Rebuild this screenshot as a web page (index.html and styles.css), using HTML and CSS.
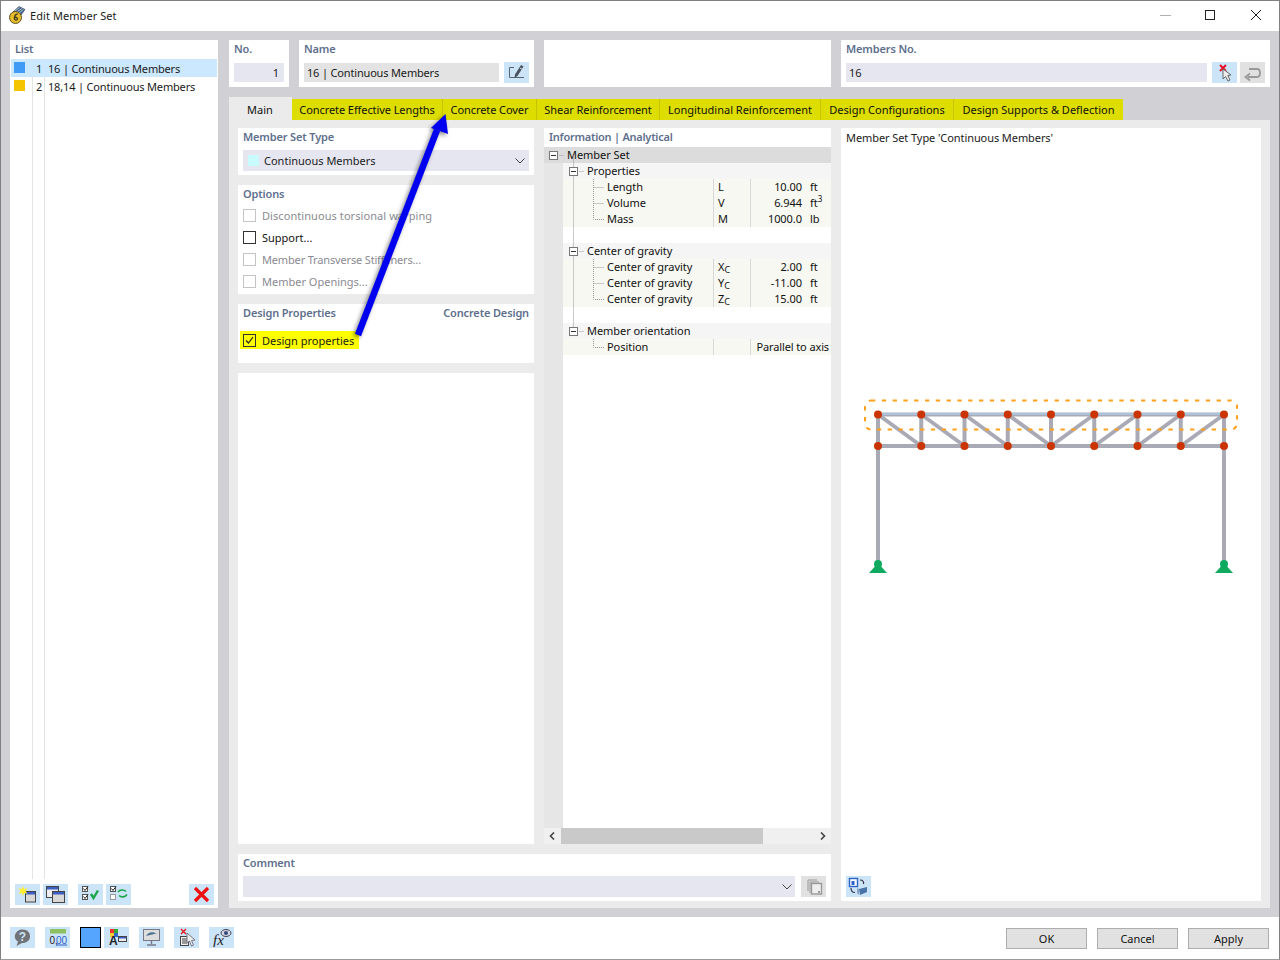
FILE: index.html
```html
<!DOCTYPE html>
<html lang="en">
<head>
  <meta charset="UTF-8">
  <title>Edit Member Set</title>
  <link rel="stylesheet" href="styles.css">
</head>
<body>
<div class="window">
  <div class="titlebar">
    <svg class="app-icon" width="18" height="18" viewBox="0 0 18 18">
      <path d="M5 6 L11 0.500 L17 3.500 L13 9 Z" fill="#44668c" stroke="#2c3c54" stroke-width=".6"/>
      <path d="M7 5 L11.500 1.500 M9 6 L14 2.500 M11 7 L15.500 3.500" stroke="#c8d4e0" stroke-width=".8"/>
      <circle cx="7.500" cy="11.500" r="6" fill="#e6bb2c" stroke="#5a5220"/>
      <path d="M9.800 8.200 C6.500 7.500 5.200 14.200 7.800 14.200 C10.300 14.200 10 10.800 6.500 11.300" fill="none" stroke="#3a3a20" stroke-width="1.300"/>
    </svg>
    <span class="title-text">Edit Member Set</span>
    <div class="win-controls">
      <svg width="12" height="12" viewBox="0 0 12 12"><path d="M0 6.500H11" stroke="#b0b0b0"/></svg>
      <svg width="12" height="12" viewBox="0 0 12 12"><rect x="1.500" y="1.500" width="9" height="9" fill="none" stroke="#222"/></svg>
      <svg width="12" height="12" viewBox="0 0 12 12"><path d="M1 1L11 11M11 1L1 11" stroke="#222"/></svg>
    </div>
  </div>

  <div class="main">
    <aside class="list-panel">
      <div class="group-title list-title">List</div>
      <div class="list-body">
        <div class="list-row selected"><span class="swatch blue"></span><span class="idx">1</span><span>16 | Continuous Members</span></div>
        <div class="list-row"><span class="swatch amber"></span><span class="idx">2</span><span>18,14 | Continuous Members</span></div>
      </div>
      <div class="list-tools">
        <button class="tool">
          <svg width="21" height="19" viewBox="0 0 21 19"><rect x="8.500" y="6.500" width="10" height="10.500" fill="#d8d8d8" stroke="#444"/><rect x="9" y="7" width="9" height="2.500" fill="#3d5fc4"/><path d="M6 1L7.200 4L10.500 3.300L8.500 6L10.500 8.700L7.200 8L6 11L4.800 8L1.500 8.700L3.500 6L1.500 3.300L4.800 4Z" fill="#ffee33"/></svg>
        </button>
        <button class="tool">
          <svg width="21" height="19" viewBox="0 0 21 19"><rect x="1.500" y="1.500" width="12" height="11" fill="#eee" stroke="#444"/><rect x="2" y="2" width="11" height="2.500" fill="#3d5fc4"/><rect x="7.500" y="6.500" width="12" height="11" fill="#d8d8d8" stroke="#444"/><rect x="8" y="7" width="11" height="2.500" fill="#3d5fc4"/></svg>
        </button>
        <button class="tool tool-sep">
          <svg width="21" height="19" viewBox="0 0 21 19"><rect x="2.500" y="1.500" width="5" height="5" fill="#fff" stroke="#555"/><rect x="2.500" y="9.500" width="5" height="5" fill="#fff" stroke="#555"/><path d="M3.500 3.500L5 5.500L8 1.500M3.500 11.500L5 13.500L8 9.500" fill="none" stroke="#222"/><path d="M11 9L13.500 13L18 5.500" fill="none" stroke="#1aa64a" stroke-width="2.400"/></svg>
        </button>
        <button class="tool">
          <svg width="21" height="19" viewBox="0 0 21 19"><rect x="2.500" y="1.500" width="5" height="5" fill="#fff" stroke="#555"/><rect x="2.500" y="9.500" width="5" height="5" fill="#fff" stroke="#999"/><path d="M3.500 3.500L5 5.500L8 1.500" fill="none" stroke="#222"/><path d="M10 7C12 4.500 16 4.500 18 6.500M19 9.500C17 12.500 13 12.500 11 10.500" fill="none" stroke="#1aa64a" stroke-width="1.600"/></svg>
        </button>
        <button class="tool tool-end">
          <svg width="21" height="19" viewBox="0 0 21 19"><path d="M4 3L17 16M17 3L4 16" stroke="#ee1111" stroke-width="3.200"/></svg>
        </button>
      </div>
    </aside>

    <div class="content">
      <div class="top-row">
        <div class="card no-card">
          <div class="group-title">No.</div>
          <div class="field right">1</div>
        </div>
        <div class="card name-card">
          <div class="group-title">Name</div>
          <div class="field-row">
            <div class="field grey grow piped">16 | Continuous Members</div>
            <button class="tool">
              <svg width="21" height="19" viewBox="0 0 21 19"><path d="M8 4.500H3.500V14.500H18" fill="none" stroke="#5a6470"/><path d="M15 2L17.500 3.500L11.500 13L8.500 15L9 11.500Z" fill="#4a525c"/><path d="M14 5L16 6.200" stroke="#cce4f7"/></svg>
            </button>
          </div>
        </div>
        <div class="card blank-card"></div>
        <div class="card members-card">
          <div class="group-title">Members No.</div>
          <div class="field-row">
            <div class="field grow">16</div>
            <button class="tool">
              <svg width="21" height="19" viewBox="0 0 21 19"><path d="M6 2L12 8M12 2L6 8" stroke="#e8102a" stroke-width="2"/><path d="M9 6L9 16L11.500 13.500L14 18L16 17L13.800 12.500L17 12Z" fill="#eee" stroke="#666"/></svg>
            </button>
            <button class="tool disabled">
              <svg width="21" height="19" viewBox="0 0 21 19"><path d="M6 14H15C19 14 19 6 15 6H7" fill="none" stroke="#999" stroke-width="1.800"/><path d="M8 10.500L3.500 14L8 17.500" fill="none" stroke="#999" stroke-width="1.800"/></svg>
            </button>
          </div>
        </div>
      </div>

      <div class="tabs-area">
        <div class="tabs">
          <div class="tab active">Main</div>
          <div class="tab">Concrete Effective Lengths</div>
          <div class="tab">Concrete Cover</div>
          <div class="tab">Shear Reinforcement</div>
          <div class="tab">Longitudinal Reinforcement</div>
          <div class="tab">Design Configurations</div>
          <div class="tab">Design Supports &amp; Deflection</div>
        </div>
        <div class="tab-body">
          <div class="left-side">
            <div class="upper">
              <div class="settings">
                <section class="card set-type">
                  <div class="group-title">Member Set Type</div>
                  <div class="select">
                    <span class="swatch cyan"></span>
                    <span>Continuous Members</span>
                    <svg class="chev" width="10" height="6" viewBox="0 0 10 6"><path d="M.5 .5L5 5L9.500 .5" fill="none" stroke="#444"/></svg>
                  </div>
                </section>
                <section class="card options">
                  <div class="group-title">Options</div>
                  <div class="check-row off spread"><span class="check"></span>Discontinuous torsional warping</div>
                  <div class="check-row"><span class="check"></span>Support...</div>
                  <div class="check-row off tight"><span class="check"></span>Member Transverse Stiffeners...</div>
                  <div class="check-row off"><span class="check"></span>Member Openings...</div>
                </section>
                <section class="card design">
                  <div class="group-title split"><span>Design Properties</span><span>Concrete Design</span></div>
                  <div class="marked">
                    <span class="check">
                      <svg width="11" height="11" viewBox="0 0 11 11"><path d="M2 5.500L4.500 8L9 2" fill="none" stroke="#222" stroke-width="1.200"/></svg>
                    </span>Design properties
                  </div>
                </section>
                <section class="card filler"></section>
              </div>

              <div class="card info">
                <div class="group-title info-title">Information | Analytical</div>
                <div class="tree">
                  <svg class="tree-lines" width="60" height="210" viewBox="0 0 60 210">
                    <g stroke="#999" stroke-dasharray="1 1" fill="none">
                      <path d="M15.500 8.500H20M29.500 8.500V184.500M35.500 24.500H40M35.500 104.500H40M35.500 184.500H40M49.500 32V72.500H60M49.500 40.500H60M49.500 56.500H60M49.500 112V152.500H60M49.500 120.500H60M49.500 136.500H60M49.500 192V200.500H60"/>
                    </g>
                  </svg>
                  <div class="tree-row head"><span class="box"></span>Member Set</div>
                  <div class="tree-row sub"><span class="box"></span>Properties</div>
                  <div class="tree-row leaf"><span class="nm">Length</span><span class="sym">L</span><span class="val">10.00</span><span class="unit">ft</span></div>
                  <div class="tree-row leaf"><span class="nm">Volume</span><span class="sym">V</span><span class="val">6.944</span><span class="unit">ft<sup>3</sup></span></div>
                  <div class="tree-row leaf"><span class="nm">Mass</span><span class="sym">M</span><span class="val">1000.0</span><span class="unit">lb</span></div>
                  <div class="tree-row gap"></div>
                  <div class="tree-row sub"><span class="box"></span>Center of gravity</div>
                  <div class="tree-row leaf"><span class="nm">Center of gravity</span><span class="sym">X<small>C</small></span><span class="val">2.00</span><span class="unit">ft</span></div>
                  <div class="tree-row leaf"><span class="nm">Center of gravity</span><span class="sym">Y<small>C</small></span><span class="val">-11.00</span><span class="unit">ft</span></div>
                  <div class="tree-row leaf"><span class="nm">Center of gravity</span><span class="sym">Z<small>C</small></span><span class="val">15.00</span><span class="unit">ft</span></div>
                  <div class="tree-row gap"></div>
                  <div class="tree-row sub"><span class="box"></span>Member orientation</div>
                  <div class="tree-row leaf"><span class="nm">Position</span><span class="sym"></span><span class="val wide">Parallel to axis</span></div>
                  <div class="tree-rest"></div>
                </div>
                <div class="scrollbar">
                  <svg width="6" height="8" viewBox="0 0 6 8"><path d="M5 .5L1.500 4L5 7.500" fill="none" stroke="#444" stroke-width="1.600"/></svg>
                  <div class="thumb"></div>
                  <svg width="6" height="8" viewBox="0 0 6 8"><path d="M1 .5L4.500 4L1 7.500" fill="none" stroke="#444" stroke-width="1.600"/></svg>
                </div>
              </div>
            </div>
            <section class="card comment">
              <div class="group-title">Comment</div>
              <div class="field-row">
                <div class="select grow">
                  <svg class="chev" width="10" height="6" viewBox="0 0 10 6"><path d="M.5 .5L5 5L9.500 .5" fill="none" stroke="#444"/></svg>
                </div>
                <button class="tool disabled">
                  <svg width="21" height="19" viewBox="0 0 21 19"><path d="M5 14V3H14M7 16V5H16" fill="none" stroke="#999"/><rect x="8.500" y="6.500" width="10" height="10.500" fill="#eee" stroke="#999" stroke-width="1.400"/><rect x="15" y="14" width="2" height="2" fill="#999"/></svg>
                </button>
              </div>
            </section>
          </div>

          <div class="card preview">
            <div class="preview-title">Member Set Type 'Continuous Members'</div>
            <svg class="truss" width="420" height="200" viewBox="841 390 420 200">
              <g stroke="#aaaab6" stroke-width="4" fill="none">
                <path d="M878 414.500V567M1224 414.500V567"/>
                <path d="M878 446H1224"/>
                <path d="M921.250 414.500V446M964.500 414.500V446M1007.750 414.500V446M1051 414.500V446M1094.250 414.500V446M1137.500 414.500V446M1180.750 414.500V446"/>
                <path d="M878 414.500L921.250 446M921.250 414.500L964.500 446M964.500 414.500L1007.750 446M1007.750 414.500L1051 446"/>
                <path d="M1051 446L1094.250 414.500M1094.250 446L1137.500 414.500M1137.500 446L1180.750 414.500M1180.750 446L1224 414.500"/>
                <path d="M878 414.500H1224"/>
              </g>
              <path d="M878 414H1224" stroke="#a9cbe8" stroke-width="1.600"/>
              <rect x="865" y="400.500" width="372" height="29" rx="6" fill="none" stroke="#ff9f1a" stroke-width="2" stroke-dasharray="4.300 6.500"/>
              <g fill="#c93400">
                <circle cx="878" cy="414.500" r="4"/><circle cx="921.250" cy="414.500" r="4"/><circle cx="964.500" cy="414.500" r="4"/><circle cx="1007.750" cy="414.500" r="4"/><circle cx="1051" cy="414.500" r="4"/><circle cx="1094.250" cy="414.500" r="4"/><circle cx="1137.500" cy="414.500" r="4"/><circle cx="1180.750" cy="414.500" r="4"/><circle cx="1224" cy="414.500" r="4"/>
                <circle cx="878" cy="446" r="4"/><circle cx="921.250" cy="446" r="4"/><circle cx="964.500" cy="446" r="4"/><circle cx="1007.750" cy="446" r="4"/><circle cx="1051" cy="446" r="4"/><circle cx="1094.250" cy="446" r="4"/><circle cx="1137.500" cy="446" r="4"/><circle cx="1180.750" cy="446" r="4"/><circle cx="1224" cy="446" r="4"/>
              </g>
              <g fill="#0fa95f">
                <circle cx="878" cy="564" r="4"/><path d="M878 563L887 573H869Z"/>
                <circle cx="1224" cy="564" r="4"/><path d="M1224 563L1233 573H1215Z"/>
              </g>
            </svg>
            <button class="tool preview-btn">
              <svg width="21" height="19" viewBox="0 0 21 19"><rect x="1.500" y="1.500" width="8" height="8" fill="#fff" stroke="#2d62c8" stroke-width="1.400"/><rect x="3.500" y="4" width="3" height="4" fill="#2d62c8"/><path d="M12 3C15 3 16 5 15.500 7M3 11C3 14 5 15.500 7 15.500" fill="none" stroke="#334" stroke-width="1.200"/><path d="M11 12L19 10V15L12 18Z" fill="#4a74a8"/><path d="M11 12V18L9 16V11Z" fill="#8aa4c4"/></svg>
            </button>
          </div>
        </div>
      </div>
    </div>
  </div>

  <div class="bottombar">
    <button class="tool">
      <svg width="21" height="19" viewBox="0 0 21 19"><path d="M10.500 1.500C15.500 1.500 18.500 5 18 9C17.500 13 14 15 10 15L4.500 18L6 13.500C3 12 2.500 9 3 7C4 3.500 7 1.500 10.500 1.500Z" fill="#707478"/><text class="help-mark" x="10.500" y="12.500">?</text></svg>
    </button>
    <button class="tool">
      <svg width="21" height="19" viewBox="0 0 21 19"><rect x="3" y="1" width="16" height="4.500" fill="#8cc063"/><text class="num-mark" x="2.500" y="15.500">0,</text><text class="num-mark under" x="9" y="15.500">00</text></svg>
    </button>
    <span class="color-square"></span>
    <button class="tool snug">
      <svg width="21" height="19" viewBox="0 0 21 19"><rect x="4" y="1" width="4" height="4" fill="#e33"/><rect x="8" y="1" width="4" height="4" fill="#3a3"/><rect x="4" y="5" width="4" height="4" fill="#ec3"/><rect x="8" y="5" width="4" height="4" fill="#36c"/><text class="a-mark" x="3" y="17">A</text><rect x="12.500" y="8.500" width="8" height="5" fill="#eee" stroke="#444"/><rect x="13" y="9" width="7" height="1.500" fill="#3d5fc4"/></svg>
    </button>
    <button class="tool">
      <svg width="21" height="19" viewBox="0 0 21 19"><rect x="2.500" y="1.500" width="16" height="11" fill="#ddd" stroke="#778"/><path d="M5 8C7 4 12 3 16 6C13 5 11 7 9 7C8 7 6 8 5 8Z" fill="#50708c"/><path d="M10.500 12.500V16M6 17H15" stroke="#778" stroke-width="1.400"/></svg>
    </button>
    <button class="tool">
      <svg width="21" height="19" viewBox="0 0 21 19"><path d="M5 1L10 6M10 1L5 6" stroke="#d22" stroke-width="1.500"/><rect x="4.500" y="8.500" width="8" height="9" fill="#eee" stroke="#444"/><path d="M6 11H11M6 13H11M6 15H11" stroke="#444"/><path d="M11 5V15L13.500 13L15.500 18L17.500 17L15.500 12.500L19 12Z" fill="#eee" stroke="#778"/></svg>
    </button>
    <button class="tool">
      <svg width="21" height="19" viewBox="0 0 21 19"><text class="fx-mark" x="2" y="17">fx</text><ellipse cx="15" cy="5" rx="5" ry="3.500" fill="#cfd6e4" stroke="#445"/><circle cx="15" cy="5" r="2" fill="#3a4a78"/></svg>
    </button>
    <div class="actions">
      <button class="btn">OK</button>
      <button class="btn">Cancel</button>
      <button class="btn">Apply</button>
    </div>
  </div>
</div>

<svg class="arrow" width="130" height="240" viewBox="330 110 130 240">
  <path d="M358 335L437 130" stroke="#0000f0" stroke-width="6.500" fill="none"/>
  <path d="M445.500 114L448 134L431 128Z" fill="#0000f0"/>
</svg>
</body>
</html>
```

FILE: styles.css
```css
* {
  box-sizing: border-box;
}
body {
  margin: 0;
  overflow: hidden;
  font-family: "Noto Sans", Arial, sans-serif;
  font-size: 11px;
  color: #1a1a1a;
}
button {
  font: inherit;
  padding: 0;
  border: none;
}
svg {
  display: block;
}
.window {
  position: relative;
  width: 1280px;
  height: 960px;
  display: flex;
  flex-direction: column;
  border: 1px solid #808080;
  border-bottom-color: #9a9a9a;
  background: #fff;
}
.titlebar {
  height: 30px;
  display: flex;
  align-items: center;
  padding: 0 0 2px 7px;
  flex-shrink: 0;
}
.title-text {
  margin-left: 4px;
  font-size: 11px;
  letter-spacing: 0.07px;
}
.win-controls {
  margin-left: auto;
  display: flex;
  gap: 34px;
  padding-right: 17px;
}
.win-controls svg:first-child {
  margin-right: -2px;
}
.main {
  flex: 1;
  min-height: 0;
  display: grid;
  grid-template-columns: 208px 1fr;
  gap: 11px;
  padding: 9px;
  background: #d0d0d5;
}
.group-title {
  font-weight: 600;
  color: #5e6f8d;
  line-height: 16px;
  letter-spacing: -0.15px;
}
.list-panel {
  background: #fff;
  display: flex;
  flex-direction: column;
  padding: 1px;
}
.list-title {
  padding: 0 0 0 4px;
  height: 18px;
  line-height: 15px;
}
.list-body {
  flex: 1;
  background:
    linear-gradient(#e4e4e4, #e4e4e4) 21px 0 / 1px 100% no-repeat,
    linear-gradient(#e4e4e4, #e4e4e4) 33px 0 / 1px 100% no-repeat;
}
.list-row {
  height: 18px;
  display: flex;
  align-items: center;
  letter-spacing: -0.17px;
}
.list-row.selected {
  background: #cce8ff;
}
.swatch {
  width: 11px;
  height: 11px;
  margin-left: 3px;
  flex-shrink: 0;
}
.list-row .swatch {
  margin-top: -2px;
}
.swatch.blue { background: #3f9bf5; }
.swatch.amber { background: #f5c400; }
.swatch.cyan { background: #c8fbfb; margin-left: 5px; }
.idx {
  width: 17px;
  margin-right: 6px;
  text-align: right;
}
.list-tools {
  display: flex;
  gap: 3px;
  padding: 5px 3px 2px 4px;
  height: 28px;
}
.tool {
  width: 25px;
  height: 21px;
  flex-shrink: 0;
  background: #cce4f7;
  display: flex;
  align-items: center;
  justify-content: center;
}
.tool.disabled {
  background: #e1e1e1;
}
.tool-sep {
  margin-left: 7px;
}
.tool-end {
  margin-left: auto;
}
.content {
  display: flex;
  flex-direction: column;
  gap: 10px;
  min-width: 0;
}
.top-row {
  display: flex;
  gap: 10px;
  height: 47px;
  flex-shrink: 0;
}
.card {
  background: #fff;
}
.top-row .card {
  padding: 1px 5px 5px;
}
.no-card { width: 60px; }
.name-card { width: 235px; }
.blank-card { width: 287px; }
.members-card { width: 429px; }
.field {
  height: 19px;
  margin-top: 6px;
  padding: 0 3px;
  line-height: 19px;
  background: #e6e6f1;
}
.no-card .field {
  margin-top: 6px;
  padding-right: 5px;
}
.field.right {
  text-align: right;
}
.field.grey {
  background: #e3e3e3;
}
.piped {
  letter-spacing: -0.17px;
}
.field-row {
  display: flex;
  align-items: flex-start;
  gap: 5px;
}
.members-card .tool + .tool {
  margin-left: -2px;
}
.field-row .tool {
  margin-top: 5px;
}
.grow {
  flex: 1;
}
.tabs-area {
  flex: 1;
  min-height: 0;
  display: flex;
  flex-direction: column;
}
.tabs {
  height: 23px;
  display: flex;
  align-items: flex-end;
  flex-shrink: 0;
}
.tab {
  height: 21px;
  line-height: 21px;
  text-align: center;
  background: #dddd00;
  border-right: 1px solid #c4c400;
  color: #111;
  white-space: nowrap;
}
.tab:nth-child(2) { width: 151px; letter-spacing: -0.08px; }
.tab:nth-child(3) { width: 94px; letter-spacing: -0.08px; }
.tab:nth-child(4) { width: 123px; letter-spacing: -0.08px; }
.tab:nth-child(5) { width: 161px; }
.tab:nth-child(6) { width: 133px; }
.tab:nth-child(7) { width: 169px; border-right: none; }
.tab.active {
  width: 63px;
  height: 23px;
  line-height: 25px;
  text-align: left;
  padding-left: 18px;
  border-right: none;
  background: #ebebeb;
}
.tab-body {
  flex: 1;
  min-height: 0;
  display: grid;
  grid-template-columns: 593px 420px;
  gap: 10px;
  padding: 8px 9px 7px;
  background: #ebebeb;
}
.left-side {
  display: flex;
  flex-direction: column;
  gap: 10px;
  min-height: 0;
}
.upper {
  flex: 1;
  min-height: 0;
  display: grid;
  grid-template-columns: 296px 287px;
  gap: 10px;
}
.settings {
  display: flex;
  flex-direction: column;
  gap: 10px;
}
.set-type {
  height: 47px;
  padding: 1px 5px;
}
.select {
  height: 21px;
  margin-top: 5px;
  display: flex;
  align-items: center;
  background: #e6e6f1;
  position: relative;
}
.select .swatch {
  margin-right: 5px;
}
.chev {
  position: absolute;
  right: 4px;
  top: 8px;
}
.options {
  height: 109px;
  padding: 1px 5px;
}
.options .group-title {
  margin-bottom: 2px;
}
.check-row {
  height: 22px;
  display: flex;
  align-items: center;
  color: #111;
}
.check-row.off {
  color: #8a8a92;
}
.check-row.spread {
  letter-spacing: 0.07px;
}
.check-row.tight {
  letter-spacing: -0.16px;
}
.check {
  width: 13px;
  height: 13px;
  margin-right: 6px;
  border: 1px solid #333;
  flex-shrink: 0;
  background: #fff;
}
.off .check {
  border-color: #c4c4c4;
}
.design {
  height: 59px;
  padding: 1px 5px;
}
.split {
  display: flex;
  justify-content: space-between;
}
.marked {
  margin: 10px 0 0 -3px;
  width: 119px;
  height: 18px;
  padding-left: 3px;
  display: flex;
  align-items: center;
  background: #ffff00;
}
.marked .check {
  background: none;
}
.filler {
  flex: 1;
}
.info {
  display: flex;
  flex-direction: column;
  min-height: 0;
}
.info-title {
  height: 19px;
  padding: 1px 5px 0;
  letter-spacing: -0.25px;
}
.tree {
  flex: 1;
  min-height: 0;
  position: relative;
  display: flex;
  flex-direction: column;
  background: linear-gradient(#e6e6e6, #e6e6e6) 0 0 / 19px 100% no-repeat;
}
.tree-lines {
  position: absolute;
  left: 0;
  top: 0;
  z-index: 1;
}
.tree-row {
  height: 16px;
  margin-left: 19px;
  display: flex;
  align-items: center;
  flex-shrink: 0;
  line-height: 16px;
  color: #111;
  letter-spacing: -0.05px;
}
.tree-row.head {
  margin-left: 0;
  padding-left: 5px;
  background: #dcdcdc;
}
.tree-row.sub {
  padding-left: 6px;
  background: #f5f5f5;
}
.tree-row.leaf {
  padding-left: 44px;
  background: #f7f8f1;
}
.box {
  width: 9px;
  height: 9px;
  margin-right: 9px;
  flex-shrink: 0;
  background:
    linear-gradient(#333, #333) center / 5px 1px no-repeat,
    #fff;
  border: 1px solid #777;
  position: relative;
  z-index: 2;
}
.nm {
  width: 106px;
  flex-shrink: 0;
  height: 100%;
}
.sym {
  width: 38px;
  height: 100%;
  padding-left: 4px;
  flex-shrink: 0;
  border-left: 1px solid #d8d8d8;
  border-right: 1px solid #d8d8d8;
}
.sym small {
  font-size: 9px;
  position: relative;
  top: 2px;
}
.val {
  width: 51px;
  text-align: right;
  flex-shrink: 0;
}
.val.wide {
  width: 79px;
  white-space: nowrap;
  padding-right: 1px;
  letter-spacing: -0.12px;
}
.unit {
  padding-left: 8px;
  white-space: nowrap;
}
.unit sup {
  font-size: 8px;
  line-height: 0;
}
.tree-rest {
  flex: 1;
}
.scrollbar {
  height: 16px;
  flex-shrink: 0;
  display: flex;
  align-items: center;
  justify-content: space-between;
  position: relative;
  padding: 0 5px;
  background: #f0f0f0;
}
.thumb {
  position: absolute;
  left: 17px;
  top: 0;
  width: 202px;
  height: 16px;
  background: #c9c9c9;
}
.comment {
  height: 47px;
  padding: 1px 5px;
}
.comment .tool {
  margin-top: 5px;
}
.comment .field-row {
  gap: 6px;
}
.comment .chev {
  right: 3px;
}
.preview {
  display: flex;
  flex-direction: column;
}
.preview-title {
  height: 20px;
  padding: 1px 5px 0;
  line-height: 18px;
  letter-spacing: -0.08px;
}
.truss {
  margin-top: 242px;
}
.preview-btn {
  margin: auto 0 4px 5px;
}
.bottombar {
  height: 42px;
  flex-shrink: 0;
  display: flex;
  align-items: flex-start;
  padding: 10px 10px 0 9px;
  gap: 10px;
  background: #fff;
}
.color-square {
  width: 21px;
  height: 21px;
  border: 1px solid #000;
  background: #55a5ff;
  flex-shrink: 0;
}
.snug {
  margin-left: -7px;
}
.actions {
  margin-left: auto;
  display: flex;
  gap: 10px;
  padding-top: 1px;
}
.btn {
  width: 81px;
  height: 21px;
  background: #e1e1e1;
  border: 1px solid #adadad;
  color: #111;
}
.help-mark {
  font: bold 12px "Liberation Sans", sans-serif;
  fill: #cce4f7;
  text-anchor: middle;
}
.num-mark {
  font: 10px "Liberation Sans", sans-serif;
  fill: #222;
}
.num-mark.under {
  fill: #2d62c8;
  text-decoration: underline;
}
.a-mark {
  font: bold 12px "Liberation Sans", sans-serif;
  fill: #222;
}
.fx-mark {
  font: italic 15px "Liberation Serif", serif;
  fill: #222;
}
.arrow {
  position: absolute;
  left: 330px;
  top: 110px;
  filter: drop-shadow(-2px 2px 2px rgba(0, 0, 0, 0.45));
  pointer-events: none;
}
```
